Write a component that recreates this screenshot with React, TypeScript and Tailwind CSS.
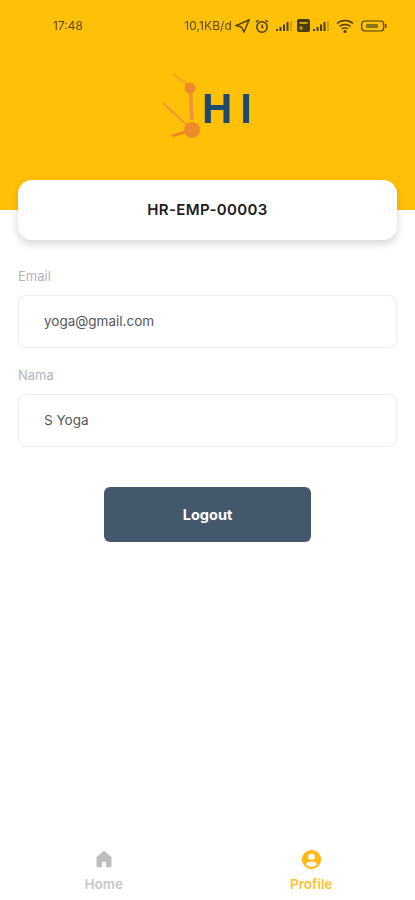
const font = { fontFamily: "Inter, 'Liberation Sans', sans-serif" };

function StatusBar() {
  return (
    <div className="flex h-[50px] items-center pl-[53px] pr-[28px] pt-[1px] text-[12px] text-[#5b4a10] blur-[0.4px]">
      <span className="w-[32px]">17:48</span>
      <div className="ml-auto flex items-center gap-[3px]">
        <span className="tracking-[0.1px]">10,1KB/d</span>
        <svg width="15" height="14" viewBox="0 0 15 14" fill="none" stroke="#4a3d10" strokeWidth="1.4">
          <path d="M14 1 1 6.500l5.500 1.500L9 13z" />
        </svg>
        <svg className="ml-[1px]" width="16" height="16" viewBox="0 0 16 16" fill="none" stroke="#4a3d10" strokeWidth="1.5">
          <circle cx="8" cy="9" r="5.200" />
          <path d="M2 4l2.500-2M14 4l-2.500-2M8 6.500V9l1.500 1" />
        </svg>
        <svg className="ml-[3px]" width="17" height="12" viewBox="0 0 17 12" fill="#4a3d10">
          <rect x="0" y="9" width="2" height="2" />
          <rect x="3.500" y="7" width="2" height="4" />
          <rect x="7" y="4.500" width="2" height="6.500" />
          <rect x="10.500" y="2" width="2" height="9" />
          <rect x="14.500" y="1" width="1" height="10" opacity="0.5" />
        </svg>
        <svg className="ml-[1px]" width="13" height="13" viewBox="0 0 13 13">
          <rect width="13" height="13" rx="2" fill="#4a3d10" />
          <rect x="2.500" y="3" width="8" height="2" fill="#c9a30a" />
          <rect x="2.500" y="7.500" width="3" height="3" fill="#c9a30a" />
        </svg>
        <svg width="17" height="12" viewBox="0 0 17 12" fill="#4a3d10">
          <rect x="0" y="9" width="2" height="2" />
          <rect x="3.500" y="7" width="2" height="4" />
          <rect x="7" y="4.500" width="2" height="6.500" />
          <rect x="10.500" y="2" width="2" height="9" />
          <rect x="14.500" y="1" width="1" height="10" opacity="0.5" />
        </svg>
        <svg className="ml-[3px]" width="18" height="14" viewBox="0 0 18 14" fill="none" stroke="#4a3d10" strokeWidth="1.5">
          <path d="M1 4.500c4.500-4 11.500-4 16 0M3.500 7.500c3-2.600 8-2.600 11 0M6 10c1.600-1.300 4.400-1.300 6 0" />
          <circle cx="9" cy="12.500" r="0.8" fill="#4a3d10" />
        </svg>
        <svg className="ml-[4px]" width="26" height="12" viewBox="0 0 26 12" fill="none">
          <rect x="0.700" y="1" width="22" height="10" rx="3" stroke="#4a3d10" strokeWidth="1.200" />
          <rect x="24" y="4" width="1.500" height="4" rx="0.700" fill="#4a3d10" />
          <rect x="5" y="4" width="12" height="4" rx="1" fill="#8a7420" />
        </svg>
      </div>
    </div>
  );
}

function Logo() {
  return (
    <div className="mt-[20px] flex h-[70px] items-center justify-center">
      <svg width="42" height="70" viewBox="0 0 42 70" fill="none" className="blur-[0.3px]">
        <path d="M13 4 30 17" stroke="#f2933a" strokeWidth="1.500" />
        <path d="M3 33 32 60" stroke="#f2933a" strokeWidth="1.800" />
        <path d="M12 66 32 60" stroke="#ef8226" strokeWidth="2.800" />
        <path d="M28.500 18 30 50 34 50 32 18z" fill="#f2933a" />
        <circle cx="30" cy="18" r="5.500" fill="#ef8a2c" />
        <circle cx="32" cy="60" r="8" fill="#ef8a2c" />
      </svg>
      <span className="mt-[8px] w-[53px] text-[42px] font-bold leading-[36px] tracking-[8px] whitespace-nowrap text-[#1d4a6e] blur-[0.4px] [font-family:'Liberation_Sans',sans-serif]">
        HI
      </span>
    </div>
  );
}

function Field({ label, value }: { label: string; value: string }) {
  return (
    <div className="flex flex-col">
      <label className="mb-[9px] text-[13px] leading-[20px] text-[#b3b3bd]">{label}</label>
      <div className="flex h-[53px] items-center rounded-[8px] border border-[#eeeef0] bg-white pl-[25px] text-[13.500px] text-[#55555a] shadow-[0_0_2px_rgba(0,0,0,0.04)]">
        {value}
      </div>
    </div>
  );
}

export default function App() {
  return (
    <div className="flex h-[900px] flex-col overflow-hidden bg-white" style={font}>
      <header className="h-[210px] shrink-0 bg-[#ffc107]">
        <StatusBar />
        <Logo />
      </header>

      <main className="flex flex-col px-[18px]">
        <div className="-mt-[30px] flex h-[60px] items-center justify-center rounded-[14px] bg-white text-[15px] font-semibold tracking-[0.35px] text-[#1c1c1e] shadow-[0_4px_8px_rgba(0,0,0,0.16)]">
          HR-EMP-00003
        </div>

        <div className="mt-[26px] flex flex-col gap-[17px]">
          <Field label="Email" value="yoga@gmail.com" />
          <Field label="Nama" value="S Yoga" />
        </div>

        <button className="mx-auto mt-[40px] h-[55px] w-[207px] rounded-[6px] bg-[#44586c] text-[14.500px] font-bold text-white">
          Logout
        </button>
      </main>

      <nav className="mt-auto flex h-[68px] shrink-0 pb-[6px] text-[13.500px] font-semibold">
        <div className="flex flex-1 flex-col items-center justify-end gap-[5px] text-[#c8c8c8]">
          <svg width="20" height="20" viewBox="0 0 24 24" fill="#bdbdbd">
            <path d="M12 2 3 9.500V22h6.500v-6.500h5V22H21V9.500z" />
          </svg>
          <span>Home</span>
        </div>
        <div className="flex flex-1 flex-col items-center justify-end gap-[4px] text-[#ffc427]">
          <svg width="21" height="21" viewBox="0 0 24 24" fill="#ffb90f">
            <path d="M12 1a11 11 0 1 0 0 22 11 11 0 0 0 0-22zm0 4a3.800 3.800 0 1 1 0 7.600A3.800 3.800 0 0 1 12 5zm0 15.500a8.600 8.600 0 0 1-6.500-3c.800-2 3.800-3.200 6.500-3.200s5.700 1.200 6.500 3.200a8.600 8.600 0 0 1-6.500 3z" />
          </svg>
          <span>Profile</span>
        </div>
      </nav>
    </div>
  );
}
